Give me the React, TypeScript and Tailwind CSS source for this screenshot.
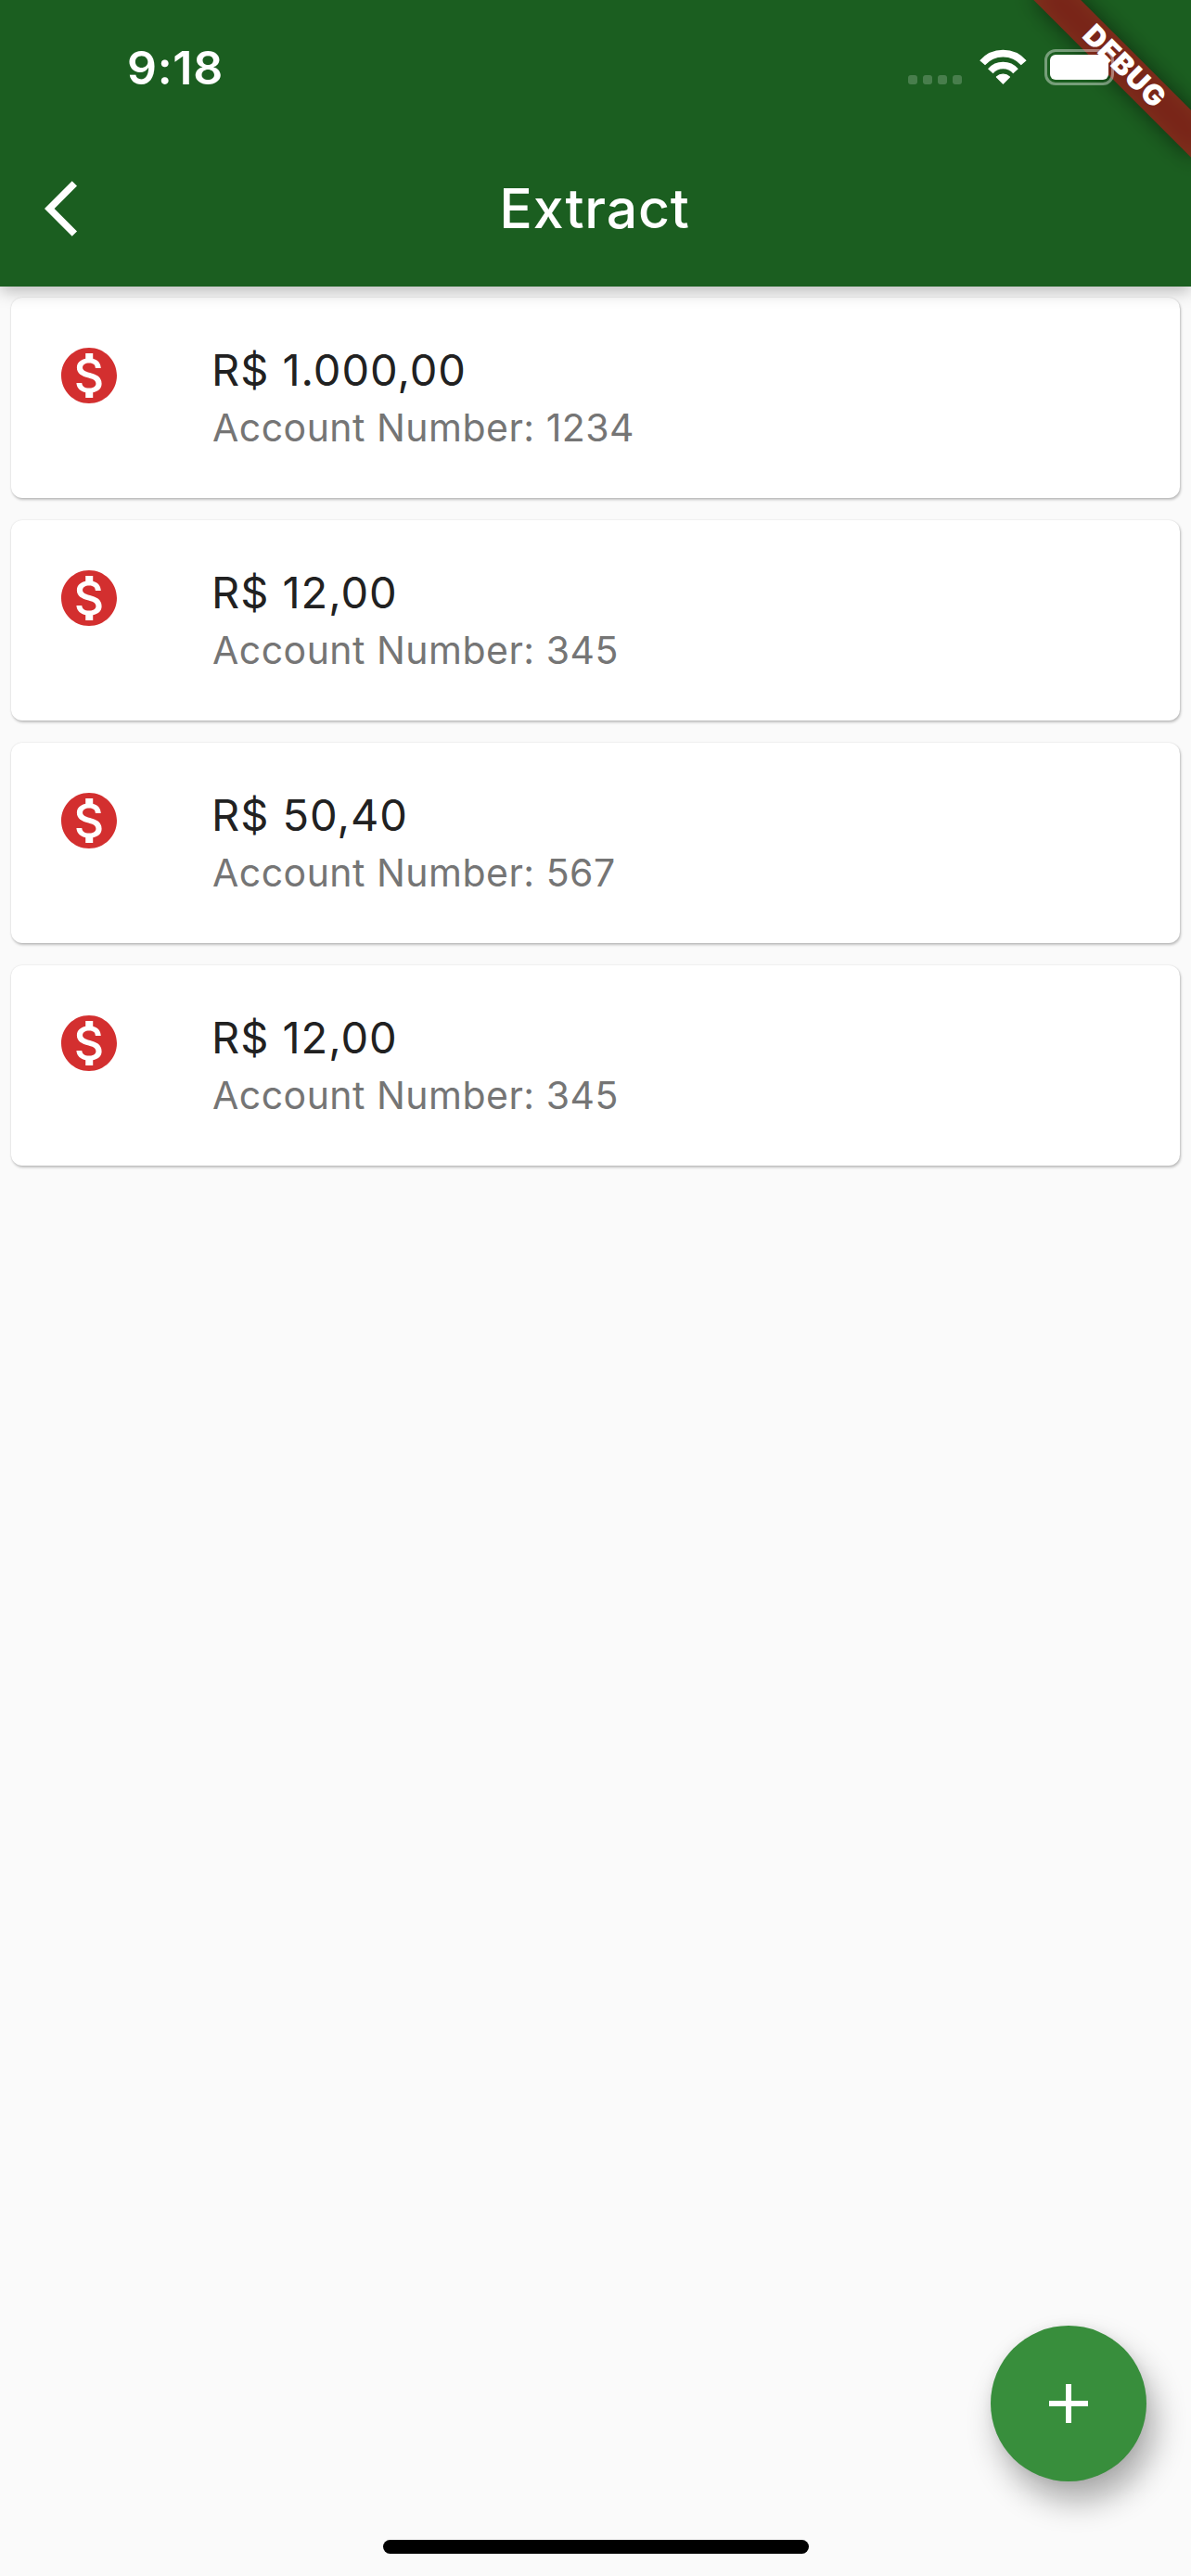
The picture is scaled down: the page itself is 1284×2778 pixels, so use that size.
type Transfer = { value: string; account: string };

const transfers: Transfer[] = [
  { value: "R$ 1.000,00", account: "1234" },
  { value: "R$ 12,00", account: "345" },
  { value: "R$ 50,40", account: "567" },
  { value: "R$ 12,00", account: "345" },
];

function WifiIcon() {
  return (
    <svg width="51" height="39" viewBox="0 0 51 39" fill="none" stroke="#fff">
      <path d="M3.1 14.75A29.5 29.5 0 0 1 47.7 14.75" strokeWidth="7.7" />
      <path d="M11.8 23.7A18.1 18.1 0 0 1 39 23.7" strokeWidth="7.4" />
      <path d="M18.4 30A10.2 10.2 0 0 1 32.4 30L25.4 37.2Z" fill="#fff" strokeWidth="1.2" strokeLinejoin="round" />
    </svg>
  );
}

function Battery() {
  return (
    <div className="flex h-[39px] w-[75px] rounded-[12px] border-[3px] border-white/40 p-[3px]">
      <div className="flex-1 rounded-[6px] bg-white" />
    </div>
  );
}

function StatusBar() {
  return (
    <div className="relative z-20 flex h-[141px] items-start justify-between pr-[83px] pl-[137px] text-white">
      <span className="mt-[43px] text-[50px] leading-[60px] font-semibold tracking-[0.7px]">9:18</span>
      <div className="mt-[53px] flex items-start">
        <div className="mt-7 mr-[19px] flex gap-1.5">
          {[0, 1, 2, 3].map((dot) => (
            <span key={dot} className="size-2.5 rounded-[3px] bg-white/20" />
          ))}
        </div>
        <WifiIcon />
        <div className="ml-[19px]">
          <Battery />
        </div>
      </div>
    </div>
  );
}

function DebugBanner() {
  return (
    <div className="pointer-events-none absolute top-0 right-0 z-10 size-[250px] overflow-hidden">
      <div className="absolute top-0 left-[130px] h-[120px] w-[240px] origin-top rotate-45">
        <div className="absolute inset-x-0 bottom-0 h-9 bg-black/50 blur-[12px]" />
        <div className="absolute inset-x-0 bottom-0 flex h-9 items-center justify-center bg-[#b71c1c]/63">
          <span className="-mt-0.5 text-[31px] leading-[30px] font-black tracking-[0.7px] text-white">DEBUG</span>
        </div>
      </div>
    </div>
  );
}

function AppBar() {
  return (
    <div className="relative flex h-[168px] items-center justify-center text-white">
      <svg className="absolute top-12 left-12" width="72" height="72" viewBox="0 0 24 24" fill="currentColor">
        <path d="M11.67 3.87L9.9 2.1 0 12l9.9 9.9 1.77-1.77L3.54 12z" />
      </svg>
      <h1 className="mr-0.5 text-[59px] leading-[72px] font-medium tracking-[0.8px]">Extract</h1>
    </div>
  );
}

function MoneyIcon() {
  return (
    <svg width="72" height="72" viewBox="0 0 24 24" fill="#d32f2f">
      <path d="M12 2C6.48 2 2 6.48 2 12s4.48 10 10 10 10-4.48 10-10S17.52 2 12 2zm1.41 16.09V20h-2.67v-1.93c-1.71-.36-3.16-1.46-3.27-3.4h1.96c.1 1.05.82 1.87 2.65 1.87 1.96 0 2.4-.98 2.4-1.59 0-.83-.44-1.61-2.67-2.14-2.48-.6-4.18-1.62-4.18-3.67 0-1.72 1.39-2.84 3.11-3.21V4h2.67v1.95c1.86.45 2.79 1.86 2.85 3.39H14.3c-.05-1.11-.64-1.87-2.22-1.87-1.5 0-2.4.68-2.4 1.64 0 .84.65 1.39 2.67 1.91s4.18 1.39 4.18 3.91c-.01 1.83-1.38 2.83-3.12 3.16z" />
    </svg>
  );
}

function TransferCard({ value, account }: Transfer) {
  return (
    <li className="flex h-[216px] items-start rounded-[12px] bg-white pt-12 pl-12 shadow-[1px_2px_3px_rgba(0,0,0,0.24),0_0_2px_rgba(0,0,0,0.12)]">
      <MoneyIcon />
      <div className="ml-24">
        <p className="text-[47px] leading-[60px] tracking-[0.95px] text-[#212121]">{value}</p>
        <p className="ml-px text-[41px] leading-[64px] tracking-[0.48px] text-[#757575]">Account Number: {account}</p>
      </div>
    </li>
  );
}

export default function App() {
  return (
    <div className="relative flex h-[2778px] w-[1284px] flex-col overflow-hidden bg-[#fafafa] font-[Inter,sans-serif]">
      <header className="relative z-10 h-[309px] bg-[#1b5e20] shadow-[0_5px_17px_rgba(0,0,0,0.26)]">
        <StatusBar />
        <AppBar />
        <DebugBanner />
      </header>

      <ul className="flex flex-1 flex-col gap-6 p-3">
        {transfers.map((transfer, index) => (
          <TransferCard key={index} {...transfer} />
        ))}
      </ul>

      <button className="absolute right-12 bottom-[102px] flex size-[168px] items-center justify-center rounded-full bg-[#388e3c] shadow-[9px_21px_34px_rgba(0,0,0,0.32),0_0_12px_rgba(0,0,0,0.06)]">
        <svg width="72" height="72" viewBox="0 0 24 24" fill="#fff">
          <path d="M19 13h-6v6h-2v-6H5v-2h6V5h2v6h6v2z" />
        </svg>
      </button>

      <div className="mb-6 ml-[413px] h-[15px] w-[459px] rounded-full bg-black" />
    </div>
  );
}
